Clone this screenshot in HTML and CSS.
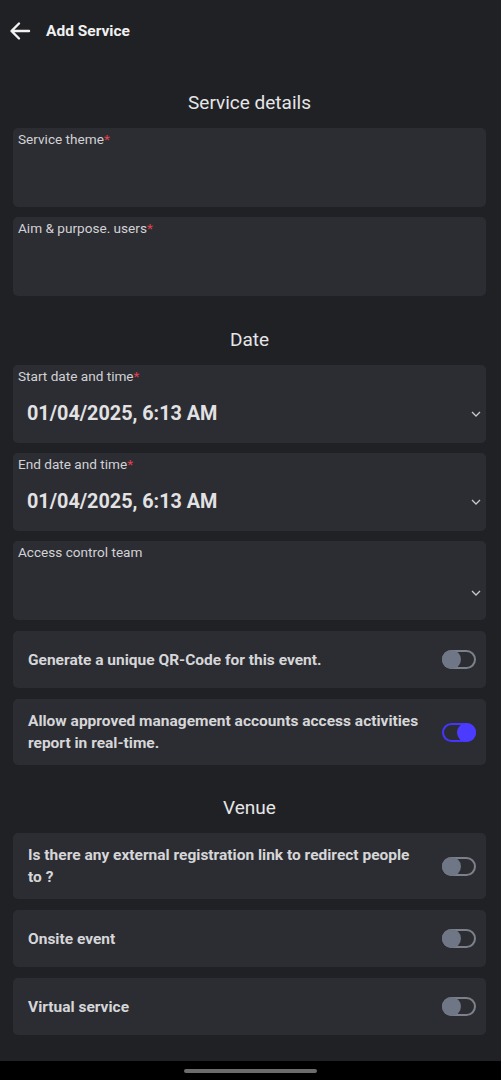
FILE: index.html
```html
<!DOCTYPE html>
<html>
<head>
<meta charset="utf-8">
<link rel="stylesheet" href="styles.css">
</head>
<body>
<div class="screen">
  <header class="appbar">
    <svg class="back" width="22" height="20" viewBox="0 0 22 20"><path d="M20 10H3M10 2.5L2.5 10L10 17.5" fill="none" stroke="#f2f2f2" stroke-width="2.4" stroke-linecap="round" stroke-linejoin="round"/></svg>
    <span class="title">Add Service</span>
  </header>
  <main class="content">
    <h2 class="section first">Service details</h2>
    <div class="field"><label>Service theme<span class="req">*</span></label></div>
    <div class="field"><label>Aim &amp; purpose. users<span class="req">*</span></label></div>

    <h2 class="section">Date</h2>
    <div class="field select">
      <label>Start date and time<span class="req">*</span></label>
      <div class="value-row"><span class="value">01/04/2025, 6:13 AM</span><svg class="chev" width="10" height="6" viewBox="0 0 10 6"><path d="M1 1l4 4 4-4" fill="none" stroke="#c8c8cc" stroke-width="1.3"/></svg></div>
    </div>
    <div class="field select">
      <label>End date and time<span class="req">*</span></label>
      <div class="value-row"><span class="value">01/04/2025, 6:13 AM</span><svg class="chev" width="10" height="6" viewBox="0 0 10 6"><path d="M1 1l4 4 4-4" fill="none" stroke="#c8c8cc" stroke-width="1.3"/></svg></div>
    </div>
    <div class="field select access">
      <label>Access control team</label>
      <div class="value-row end"><svg class="chev" width="10" height="6" viewBox="0 0 10 6"><path d="M1 1l4 4 4-4" fill="none" stroke="#c8c8cc" stroke-width="1.3"/></svg></div>
    </div>

    <div class="toggle-card"><span>Generate a unique QR-Code for this event.</span><span class="switch"></span></div>
    <div class="toggle-card two"><span>Allow approved management accounts access activities report in real-time.</span><span class="switch on"></span></div>

    <h2 class="section venue">Venue</h2>
    <div class="toggle-card two"><span>Is there any external registration link to redirect people to ?</span><span class="switch"></span></div>
    <div class="toggle-card"><span>Onsite event</span><span class="switch"></span></div>
    <div class="toggle-card"><span>Virtual service</span><span class="switch"></span></div>
  </main>
  <div class="navbar"><span class="pill"></span></div>
</div>
</body>
</html>
```
FILE: styles.css
```css
* { box-sizing: border-box; }
html, body { margin: 0; padding: 0; background: #000; }
body { font-family: Roboto, "Noto Sans", "Liberation Sans", sans-serif; color: #e4e4e6; }
.screen { width: 501px; height: 1080px; display: flex; flex-direction: column; background: #202125; }
.appbar { height: 60px; display: flex; align-items: center; padding-left: 9px; gap: 15px; }
.back { display: block; margin-top: 2px; }
.title { font-size: 15.5px; font-weight: 700; color: #f0f0f0; margin-top: 2px; }
.content { flex: 1; display: flex; flex-direction: column; gap: 10px; padding: 0 15px 0 13px; }
.section { margin: 22px 0 3px; font-size: 19px; line-height: 24px; font-weight: 400; text-align: center; color: #e6e6e8; }
.section.first { margin-top: 31px; }
.section.venue { margin-top: 21px; margin-bottom: 2px; }
.field { background: #2c2d32; border-radius: 5px; height: 79px; padding: 3px 5px 0; display: flex; flex-direction: column; }
.field label { font-size: 13.6px; line-height: 16px; color: #d2d2d6; }
.req { color: #e0424f; }
.select { height: 78px; }
.value-row { flex: 1; display: flex; align-items: center; justify-content: space-between; padding: 0 0 0 9px; }
.value { font-size: 19.8px; font-weight: 700; color: #e2e2e4; }
.chev { display: block; }
.access { height: 79px; }
.value-row.end { justify-content: flex-end; align-items: flex-end; padding-bottom: 24px; }
.toggle-card { background: #2c2d32; border-radius: 5px; min-height: 57px; margin-top: 1px; display: flex; align-items: center; justify-content: space-between; gap: 20px; padding: 0 10px 0 15px; font-size: 15.5px; font-weight: 700; line-height: 22px; color: #d6d6d9; }
.toggle-card.two { min-height: 66px; padding-top: 10px; padding-bottom: 10px; }
.switch { flex: none; width: 34px; height: 19px; border: 2px solid #7b808a; border-radius: 10px; position: relative; }
.switch::after { content: ""; position: absolute; left: -2px; top: -2px; width: 19px; height: 19px; border-radius: 50%; background: #6f7686; }
.switch.on { border-color: #4535ff; }
.switch.on::after { left: auto; right: -2px; background: #4a3bff; }
.navbar { height: 19px; background: #000; display: flex; justify-content: center; align-items: center; margin-top: 26px; }
.pill { width: 133px; height: 4px; border-radius: 2px; background: #6c6c6c; }
```
